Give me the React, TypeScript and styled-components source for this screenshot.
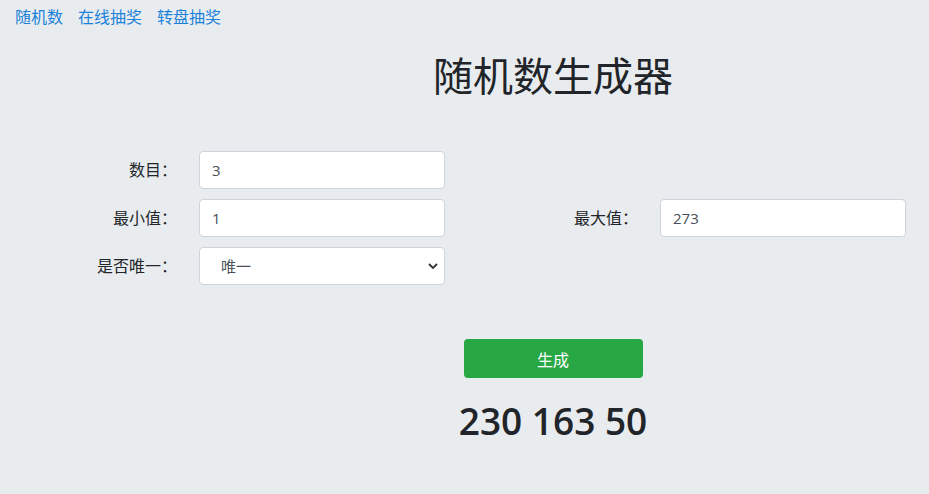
import React from "react";
import styled, { createGlobalStyle } from "styled-components";

const Global = createGlobalStyle`
  html, body { margin: 0; padding: 0; }
  body {
    background: #e9ecef;
    color: #212529;
    font-family: "Open Sans", "Noto Sans CJK SC", sans-serif;
    font-size: 16px;
    line-height: 1.5;
  }
`;

const Page = styled.div`
  padding: 5px 0 0 0;
  min-height: 489px;
`;

const Nav = styled.nav`
  display: flex;
  gap: 15px;
  padding-left: 15px;
  height: 24px;
`;

const NavLink = styled.a`
  color: #1a82d9;
  text-decoration: none;
  font-size: 16px;
`;

const Centered = styled.div`
  margin-left: 177px;
  display: flex;
  flex-direction: column;
  align-items: center;
`;

const Title = styled.h1`
  margin: 23px 0 0;
  font-size: 40px;
  font-weight: 400;
  line-height: 48px;
  color: #212529;
`;

const Form = styled.div`
  margin-top: 51px;
  display: grid;
  grid-template-columns: 177px 246px 171px 246px;
  column-gap: 22px;
  row-gap: 10px;
  align-items: center;
`;

const Label = styled.label`
  text-align: right;
  font-size: 16px;
  color: #212529;
`;

const Input = styled.input`
  box-sizing: border-box;
  height: 38px;
  width: 100%;
  padding: 0 12px;
  border: 1px solid #ced4da;
  border-radius: 4px;
  background: #fff;
  color: #495057;
  font-family: "Open Sans", "Noto Sans CJK SC", sans-serif;
  font-size: 15px;
  outline: none;
`;

const Select = styled.select`
  box-sizing: border-box;
  height: 38px;
  width: 100%;
  padding: 0 12px 0 21px;
  border: 1px solid #ced4da;
  border-radius: 4px;
  background: #fff url("data:image/svg+xml,%3Csvg xmlns='http://www.w3.org/2000/svg' width='10' height='6' viewBox='0 0 10 6'%3E%3Cpath d='M1 1l4 4 4-4' fill='none' stroke='%23333' stroke-width='1.8'/%3E%3C/svg%3E") no-repeat right 6px center;
  appearance: none;
  color: #495057;
  font-family: "Open Sans", "Noto Sans CJK SC", sans-serif;
  font-size: 15px;
  outline: none;
`;

const Spacer = styled.div``;

const Button = styled.button`
  margin-top: 54px;
  width: 179px;
  height: 39px;
  border: none;
  border-radius: 4px;
  background: #28a745;
  color: #fff;
  font-family: "Open Sans", "Noto Sans CJK SC", sans-serif;
  font-size: 16px;
  cursor: pointer;
`;

const Result = styled.div`
  margin-top: 19px;
  font-size: 37px;
  font-weight: 600;
  line-height: 48px;
  color: #212529;
`;

export default function App() {
  return (
    <>
      <Global />
      <Page>
        <Nav>
          <NavLink href="#">随机数</NavLink>
          <NavLink href="#">在线抽奖</NavLink>
          <NavLink href="#">转盘抽奖</NavLink>
        </Nav>
        <Centered>
          <Title>随机数生成器</Title>
        </Centered>
        <Form>
          <Label>数目：</Label>
          <Input defaultValue="3" />
          <Spacer />
          <Spacer />
          <Label>最小值：</Label>
          <Input defaultValue="1" />
          <Label>最大值：</Label>
          <Input defaultValue="273" />
          <Label>是否唯一：</Label>
          <Select defaultValue="1">
            <option value="1">唯一</option>
            <option value="0">不唯一</option>
          </Select>
          <Spacer />
          <Spacer />
        </Form>
        <Centered>
          <Button>生成</Button>
          <Result>230 163 50</Result>
        </Centered>
      </Page>
    </>
  );
}
